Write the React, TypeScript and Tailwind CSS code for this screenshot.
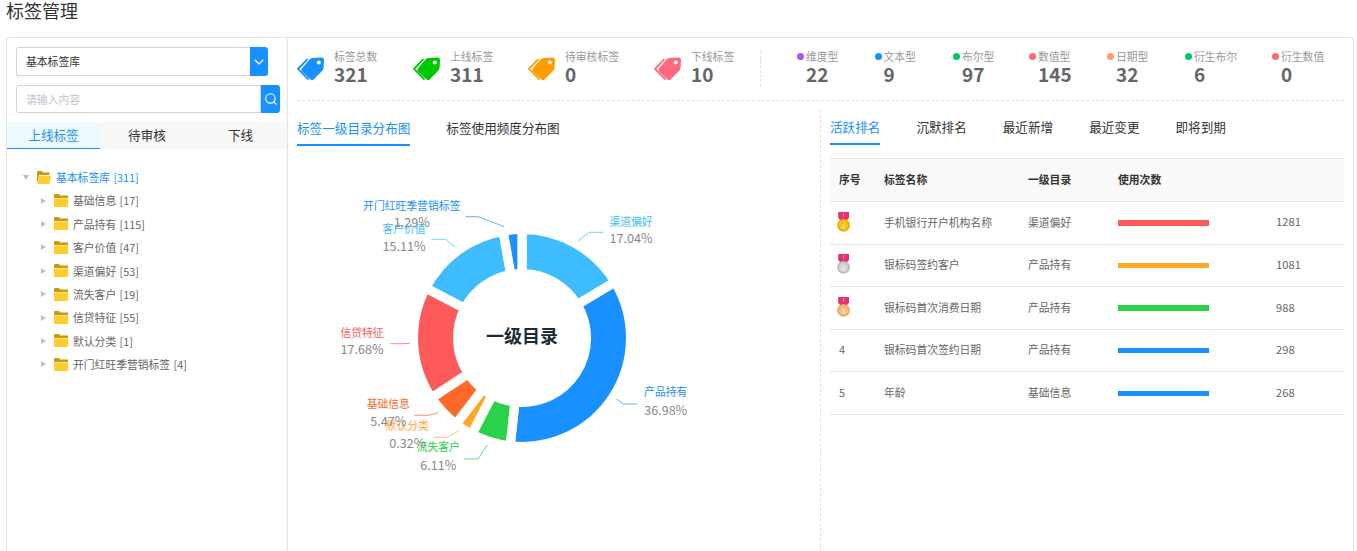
import React from 'react'
import { ChevronDown, Search } from 'lucide-react'

const font = 'font-["Noto_Sans_CJK_SC","Noto_Sans",sans-serif]'

const totals = [
  { label: '标签总数', value: '321', color: '#1890ff', width: 'w-[116px]' },
  { label: '上线标签', value: '311', color: '#00c800', width: 'w-[115px]' },
  { label: '待审核标签', value: '0', color: '#ff9c00', width: 'w-[126px]' },
  { label: '下线标签', value: '10', color: '#ff6b7d', width: 'w-[106px]' },
]

const types = [
  { label: '维度型', value: '22', dot: 'bg-[#a855f7]', width: 'w-[77.5px]' },
  { label: '文本型', value: '9', dot: 'bg-[#1890ff]', width: 'w-[78.5px]' },
  { label: '布尔型', value: '97', dot: 'bg-[#00c864]', width: 'w-[76px]' },
  { label: '数值型', value: '145', dot: 'bg-[#ff6b6b]', width: 'w-[78px]' },
  { label: '日期型', value: '32', dot: 'bg-[#ff9f6b]', width: 'w-[78px]' },
  { label: '衍生布尔', value: '6', dot: 'bg-[#00c864]', width: 'w-[87px]' },
  { label: '衍生数值', value: '0', dot: 'bg-[#ff6b6b]', width: 'w-[70px]' },
]

const treeItems = [
  '基础信息 [17]',
  '产品持有 [115]',
  '客户价值 [47]',
  '渠道偏好 [53]',
  '流失客户 [19]',
  '信贷特征 [55]',
  '默认分类 [1]',
  '开门红旺季营销标签 [4]',
]

const slices = [
  { from: 0, to: 59, color: '#3dbcff' },
  { from: 59, to: 186.3, color: '#1890ff' },
  { from: 186.3, to: 207.6, color: '#2cd14a' },
  { from: 207.6, to: 217.5, color: '#ffa828' },
  { from: 217.5, to: 236.5, color: '#ff6a2a' },
  { from: 236.5, to: 297.5, color: '#ff5a5a' },
  { from: 297.5, to: 350, color: '#3dbcff' },
  { from: 350, to: 360, color: '#1890ff' },
]

const chartLabels = [
  { name: '渠道偏好', pct: '17.04%', x: 631, y: 221.7, py: 238.3, color: '#3dbcff', line: '578.3,240.7 589.3,232.3 603.3,232.3' },
  { name: '产品持有', pct: '36.98%', x: 665.7, y: 392, py: 410, color: '#1890ff', line: '616.7,399 623.3,404 637.3,404' },
  { name: '流失客户', pct: '6.11%', x: 438.3, y: 447, py: 465, color: '#2cd14a', line: '487.3,445 478,459 464.3,459' },
  { name: '默认分类', pct: '0.32%', x: 407.3, y: 426, py: 443, color: '#ffa828', line: '459,430.7 447.3,437.3 433.3,437.3' },
  { name: '基础信息', pct: '5.47%', x: 388.3, y: 404, py: 421.7, color: '#ff6a2a', line: '438.3,412.7 428.3,415.3 414.3,415.3' },
  { name: '信贷特征', pct: '17.68%', x: 362, y: 333, py: 349, color: '#ff5a5a', line: '410,343.3 401.7,343.7 390,343.7' },
  { name: '客户价值', pct: '15.11%', x: 404, y: 229, py: 246, color: '#3dbcff', line: '455,247.3 445.7,239.3 431.7,239.3' },
  { name: '开门红旺季营销标签', pct: '1.29%', x: 411.7, y: 205.7, py: 222, color: '#1890ff', line: '504.3,226.7 478.3,216.7 465.7,216.7' },
]

const rows = [
  { rank: 1, name: '手机银行开户机构名称', cat: '渠道偏好', bar: 'bg-[#ff5a5a] h-[6px]', count: 1281 },
  { rank: 2, name: '银标码签约客户', cat: '产品持有', bar: 'bg-[#ffa828] h-[5px]', count: 1081 },
  { rank: 3, name: '银标码首次消费日期', cat: '产品持有', bar: 'bg-[#2cd14a] h-[6px]', count: 988 },
  { rank: 4, name: '银标码首次签约日期', cat: '产品持有', bar: 'bg-[#1890ff] h-[5px]', count: 298 },
  { rank: 5, name: '年龄', cat: '基础信息', bar: 'bg-[#1890ff] h-[5px]', count: 268 },
]

function arcPath(from: number, to: number) {
  const cx = 522
  const cy = 338
  const R = 108.6
  const r = 64.4
  const pt = (rad: number, deg: number) => {
    const a = (deg * Math.PI) / 180
    return `${(cx + rad * Math.sin(a)).toFixed(2)} ${(cy - rad * Math.cos(a)).toFixed(2)}`
  }
  const large = to - from > 180 ? 1 : 0
  return `M${pt(R, from)} A${R} ${R} 0 ${large} 1 ${pt(R, to)} L${pt(r, to)} A${r} ${r} 0 ${large} 0 ${pt(r, from)} Z`
}

function TagIcon({ color }: { color: string }) {
  return (
    <svg width="27" height="24" viewBox="0 0 27 24" className="shrink-0">
      <path
        d="M12 3 Q13.5 1 15.5 1 L24.5 0.5 Q27 0.5 27 3 L26.6 10.5 Q26.5 12.5 25 14 L16.5 22.5 Q15 23.8 13.5 22.5 L5 14.5 Q3.5 13 5 11.2 Z"
        fill={color}
      />
      <circle cx="21.8" cy="5.6" r="2" fill="#fff" />
      <path d="M10.5 2.2 L1 11.8 L11.5 22.6" fill="none" stroke={color} strokeWidth="1.8" />
    </svg>
  )
}

function FolderClosed() {
  return (
    <svg width="14" height="13" viewBox="0 0 14 13" className="shrink-0">
      <path d="M0 1 Q0 0 1 0 L5 0 L6 1.5 L14 1.5 L14 4 L0 4 Z" fill="#c99a0c" />
      <rect x="0" y="4.6" width="14" height="8.4" rx="0.5" fill="#ffcd2e" />
    </svg>
  )
}

function FolderOpen() {
  return (
    <svg width="14" height="13" viewBox="0 0 14 13" className="shrink-0">
      <path d="M0 1 Q0 0 1 0 L5 0 L6 1.5 L12.5 1.5 L12.5 4 L2 4 L0.8 11 L0 11 Z" fill="#c99a0c" />
      <path d="M2.4 4.8 L14 4.8 L12.6 13 L0.8 13 Z" fill="#ffcd2e" />
    </svg>
  )
}

function Medal({ rank }: { rank: number }) {
  const colors: Record<number, string[]> = {
    1: ['#f5c518', '#e8b10a'],
    2: ['#d4d4d4', '#bdbdbd'],
    3: ['#f6bd80', '#efac68'],
  }
  const [fill, ring] = colors[rank]
  return (
    <svg width="13" height="20" viewBox="0 0 13 20" className="ml-[7px]">
      <path d="M1.2 0 L12 0 L12 6 L9 9 L4 9 L1.2 6 Z" fill="#e8306e" />
      <rect x="6" y="1.5" width="1" height="3" fill="#f7a8c4" />
      <circle cx="6.5" cy="13.3" r="6.4" fill={ring} />
      <circle cx="6.5" cy="13.3" r="4.6" fill={fill} />
      <text x="6.5" y="15.5" textAnchor="middle" fontSize="6" fill="#fff" fontFamily="Liberation Sans, sans-serif">
        {rank}
      </text>
    </svg>
  )
}

function Tab({ label, active, className }: { label: string; active?: boolean; className?: string }) {
  return (
    <div
      className={`h-[26px] border-b-2 text-[12.6px] leading-[15px] ${active ? 'border-[#1890ff] text-[#1890ff]' : 'border-transparent text-[#333]'} ${className ?? ''}`}
    >
      {label}
    </div>
  )
}

export default function App() {
  return (
    <div className={`h-[551px] overflow-hidden bg-white text-[10.8px] text-[#666] ${font}`}>
      <h1 className="h-[37px] pl-[6px] text-[18px] leading-[21px] text-[#333]">标签管理</h1>

      <div className="ml-[6px] flex h-[530px] w-[1348px] rounded-t-[3px] border border-[#e4e4e4]">
        {/* 左侧标签树 */}
        <div className="w-[281px] shrink-0 border-r border-[#e4e4e4]">
          <div className="ml-[9px] mt-[9px] flex h-[29px] w-[252px]">
            <div className="flex flex-1 items-center rounded-l-[3px] border border-r-0 border-[#d4d4d4] pl-[9px] text-[#333]">
              基本标签库
            </div>
            <div className="flex w-[18px] items-center justify-center rounded-r-[3px] bg-[#1890ff]">
              <ChevronDown size={16} strokeWidth={1.75} color="#fff" />
            </div>
          </div>
          <div className="ml-[9px] mt-[9px] flex h-[28px] w-[264px]">
            <div className="flex flex-1 items-center rounded-l-[3px] border border-[#d4d4d4] pl-[9px] text-[#c0c4cc]">
              请输入内容
            </div>
            <div className="flex w-[19px] items-center justify-center rounded-r-[3px] bg-[#1890ff]">
              <Search size={14} color="#fff" />
            </div>
          </div>
          <div className="mt-[9px] flex h-[27px] bg-[#f8f8f8] text-[12.6px] text-[#333]">
            <div className="flex w-[93px] items-center justify-center border-b border-[#1890ff] bg-[#eef9fd] text-[#1890ff]">
              上线标签
            </div>
            <div className="flex w-[94px] items-center justify-center">待审核</div>
            <div className="flex w-[93px] items-center justify-center">下线</div>
          </div>

          <div className="mt-[16.5px] [word-spacing:1px]">
            <div className="flex h-[23.4px] items-center pl-[16px] text-[#1890ff]">
              <span className="mr-[8px] h-0 w-0 border-x-[3.5px] border-t-[5px] border-x-transparent border-t-[#bbb]" />
              <FolderOpen />
              <span className="ml-[5px]">基本标签库 [311]</span>
            </div>
            {treeItems.map((item) => (
              <div key={item} className="flex h-[23.4px] items-center pl-[34px]">
                <span className="mr-[8px] h-0 w-0 border-y-[3.5px] border-l-[5px] border-y-transparent border-l-[#c0c0cc]" />
                <FolderClosed />
                <span className="ml-[5px]">{item}</span>
              </div>
            ))}
          </div>
        </div>

        <div className="min-w-0 flex-1">
          {/* 统计 */}
          <div className="mx-[9px] flex h-[63px] border-b border-dashed border-[#e0e0e0] pt-[12px]">
            {totals.map((t) => (
              <div key={t.label} className={`flex ${t.width}`}>
                <div className="mt-[7px]">
                  <TagIcon color={t.color} />
                </div>
                <div className="ml-[10px]">
                  <div className="h-[12px] leading-[12px] text-[#999]">{t.label}</div>
                  <div className="h-[24px] text-[19px] font-bold leading-[24px] text-[#666]">{t.value}</div>
                </div>
              </div>
            ))}
            <div className="mb-[13px] mr-[36px] mt-[1px] w-0 border-l border-dashed border-[#e0e0e0]" />
            {types.map((t) => (
              <div key={t.label} className={t.width}>
                <div className="flex h-[12px] items-center leading-[12px] text-[#999]">
                  <span className={`mr-[2px] h-[7px] w-[7px] rounded-full ${t.dot}`} />
                  {t.label}
                </div>
                <div className="ml-[9px] h-[24px] text-[19px] font-bold leading-[24px] text-[#666]">{t.value}</div>
              </div>
            ))}
          </div>

          <div className="flex">
            {/* 分布图 */}
            <div className="w-[532px] shrink-0">
              <div className="flex h-[49px] items-end gap-[36px] pl-[9px] pb-[4px]">
                <Tab label="标签一级目录分布图" active />
                <Tab label="标签使用频度分布图" />
              </div>
              <svg width="532" height="401" viewBox="288 150 532 401" className={font}>
                {slices.map((s, i) => (
                  <path key={i} d={arcPath(s.from, s.to)} fill={s.color} stroke="#fff" strokeWidth="9.3" strokeLinejoin="bevel" />
                ))}
                <text x="522" y="343" textAnchor="middle" fontSize="18" fontWeight="700" fill="#1c2b36">
                  一级目录
                </text>
                {chartLabels.map((l) => (
                  <g key={l.name}>
                    <polyline points={l.line} fill="none" stroke={l.color} strokeWidth="1" opacity="0.7" />
                    <text x={l.x} y={l.py + 4.5} textAnchor="middle" fontSize="12.6" fill="#888">
                      {l.pct}
                    </text>
                    <text x={l.x} y={l.y + 4} textAnchor="middle" fontSize="10.8" fill={l.color}>
                      {l.name}
                    </text>
                  </g>
                ))}
              </svg>
            </div>

            {/* 排名 */}
            <div className="mt-[9px] min-w-0 flex-1 border-l border-dashed border-[#e0e0e0] pl-[9px]">
              <div className="flex h-[35px] items-end gap-[36px]">
                <Tab label="活跃排名" active />
                <Tab label="沉默排名" />
                <Tab label="最近新增" />
                <Tab label="最近变更" />
                <Tab label="即将到期" />
              </div>
              <div className="mt-[13px] w-[514px]">
                <div className="flex h-[44px] items-center border-y border-[#e4e4e4] bg-[#fafafa] pb-[2px] font-bold text-[#333]">
                  <div className="w-[54px] pl-[9px]">序号</div>
                  <div className="w-[144px]">标签名称</div>
                  <div className="w-[90px]">一级目录</div>
                  <div>使用次数</div>
                </div>
                {rows.map((r) => (
                  <div key={r.rank} className="flex h-[42.6px] items-center border-b border-[#e4e4e4]">
                    <div className="-mt-[2px] w-[54px]">
                      {r.rank <= 3 ? <Medal rank={r.rank} /> : <span className="pl-[9px]">{r.rank}</span>}
                    </div>
                    <div className="-mt-[2px] w-[144px]">{r.name}</div>
                    <div className="-mt-[2px] w-[90px]">{r.cat}</div>
                    <div className="w-[158px]">
                      <div className={`w-[91px] ${r.bar}`} />
                    </div>
                    <div className="-mt-[2px] text-[11.2px]">{r.count}</div>
                  </div>
                ))}
              </div>
            </div>
          </div>
        </div>
      </div>
    </div>
  )
}
